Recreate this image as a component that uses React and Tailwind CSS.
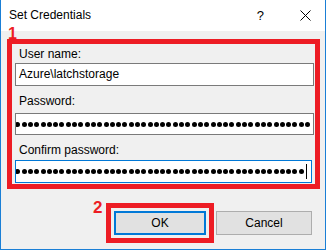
import React from "react";

const font = { fontFamily: '"Liberation Sans", Arial, sans-serif' };

function Dots({ count, cursor }) {
  return (
    <div className="h-full flex items-center justify-end overflow-hidden gap-[1.3px] pr-[3px]">
      {Array.from({ length: count }).map((_, i) => (
        <span key={i} className="shrink-0 w-[5px] h-[5px] rounded-full bg-black" />
      ))}
      {cursor && <span className="shrink-0 w-[1px] h-[15px] bg-black ml-[1px] mr-[1px]" />}
    </div>
  );
}

export default function App() {
  return (
    <div className="w-[330px] h-[251px] bg-white text-black font-['Liberation_Sans',Arial,sans-serif]">
      <div className="w-[326px] h-[250px] border-l border-r border-b border-[#1a7fd6] flex flex-col">
        {/* Title bar */}
        <div className="h-[31px] shrink-0 bg-white flex items-center pl-[8px] text-[12px] leading-[15px]">
          <span>Set Credentials</span>
          <span className="ml-auto text-[13px]">?</span>
          <svg className="ml-[36px] mr-[14px]" width="11" height="11" viewBox="0 0 11 11">
            <path d="M0.5 0.5 L10.5 10.5 M10.5 0.5 L0.5 10.5" stroke="#000" strokeWidth="1" fill="none" />
          </svg>
        </div>
        {/* Body */}
        <div className="flex-1 bg-[#f0f0f0] flex flex-col">
          <div className="relative mt-[8px] ml-[6px] w-[313px] h-[150px] border-[5px] border-[#ed1c24] pl-[3px] pr-[1px] flex flex-col text-[12px] leading-[15px]">
            <span className="absolute left-[-4px] top-[-19px] text-[16px] leading-[18px] font-bold text-[#ed1c24]">1</span>
            <div className="pt-[3px] pb-[1px] pl-[4px]">User name:</div>
            <div className="h-[23px] border border-[#7a7a7a] bg-white flex items-center pl-[3px]">
              {"Azure\\latchstorage"}
            </div>
            <div className="pt-[8px] pb-[4px] pl-[4px]">Password:</div>
            <div className="h-[22px] border border-[#7a7a7a] bg-white">
              <Dots count={50} />
            </div>
            <div className="pt-[8px] pb-[2px] pl-[4px]">Confirm password:</div>
            <div className="h-[23px] w-[297px] border border-[#0078d7] bg-white">
              <Dots count={50} cursor />
            </div>
          </div>
          {/* Buttons */}
          <div className="mt-[14px] flex justify-end items-center pr-[13px] text-[12px] leading-[15px]">
            <div className="relative border-[5px] border-[#ed1c24] p-[3px]">
              <span className="absolute left-[-18px] top-[-10px] text-[17px] leading-[19px] font-bold text-[#ed1c24]">2</span>
              <div className="w-[92px] h-[24px] bg-[#e1e1e1] border-2 border-[#0078d7] flex items-center justify-center">
                OK
              </div>
            </div>
            <div className="ml-[2px] w-[96px] h-[24px] bg-[#e1e1e1] border border-[#adadad] flex items-center justify-center">
              Cancel
            </div>
          </div>
        </div>
      </div>
    </div>
  );
}
